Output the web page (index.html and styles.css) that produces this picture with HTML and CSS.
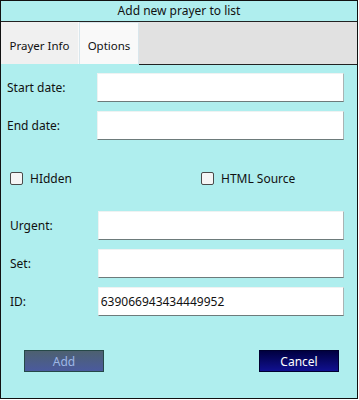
FILE: index.html
```html
<!DOCTYPE html>
<html lang="en">

<head>
  <meta charset="UTF-8">
  <meta name="viewport" content="width=device-width, initial-scale=1.0">
  <title>Add new prayer to list</title>
  <link rel="stylesheet" href="styles.css">
</head>

<body>
  <div class="window">
    <div class="titlebar">Add new prayer to list</div>

    <div class="tabs">
      <div class="tab">Prayer Info</div>
      <div class="tab active">Options</div>
      <div class="tab-fill"></div>
    </div>

    <div class="panel">
      <div class="field">
        <label class="label">Start date:</label>
        <input class="box" type="text">
      </div>
      <div class="field">
        <label class="label">End date:</label>
        <input class="box" type="text">
      </div>

      <div class="checks">
        <label class="check"><span class="tick"></span>HIdden</label>
        <label class="check check-right"><span class="tick"></span>HTML Source</label>
      </div>

      <div class="lower">
        <div class="field">
          <label class="label">Urgent:</label>
          <input class="box" type="text">
        </div>
        <div class="field">
          <label class="label">Set:</label>
          <input class="box" type="text">
        </div>
        <div class="field">
          <label class="label">ID:</label>
          <input class="box" type="text" value="639066943434449952">
        </div>
      </div>

      <div class="buttons">
        <button class="btn btn-add">Add</button>
        <button class="btn btn-cancel">Cancel</button>
      </div>
    </div>
  </div>
</body>

</html>
```

FILE: styles.css
```css
body {
  margin: 0;
  background: #fff;
  font-family: 'Noto Sans', sans-serif;
  font-size: 12px;
  color: #111;
}

.window {
  width: 358px;
  height: 399px;
  box-sizing: border-box;
  border: 1px solid #111;
  background: #afeeee;
  display: flex;
  flex-direction: column;
}

.titlebar {
  height: 20px;
  line-height: 20px;
  text-align: center;
  border-bottom: 1px solid #222;
  color: #111;
}

.tabs {
  display: flex;
  height: 43px;
}

.tab {
  width: 78px;
  height: 42px;
  box-sizing: border-box;
  background: #f0f0f0;
  border-right: 1px solid #fafafa;
  line-height: 48px;
  text-align: center;
  font-size: 11.5px;
}

.tab.active {
  width: 60px;
  background: #f9f9f9;
  border: 1px solid #d9e6ec;
  border-bottom: none;
  line-height: 46px;
}

.tab-fill {
  flex: 1;
  background: #e1e1e1;
  border-bottom: 1px solid #222;
}

.panel {
  padding: 8px 13px 0 6px;
}

.field {
  display: flex;
  align-items: center;
  height: 29px;
  margin-bottom: 9px;
}

.label {
  width: 90px;
}

.box {
  width: 247px;
  height: 29px;
  box-sizing: border-box;
  margin: 0;
  padding: 0 2px;
  background: #fff;
  border: 1px solid #eef2f2;
  border-right-color: #a9b4b4;
  border-bottom-color: #6d7b7b;
  font-family: 'Noto Sans', sans-serif;
  font-size: 12px;
  color: #111;
  outline: none;
}

.checks {
  display: flex;
  height: 13px;
  margin-top: 32px;
  padding-left: 3px;
}

.check {
  display: flex;
  align-items: center;
  gap: 7px;
  line-height: 13px;
}

.check-right {
  margin-left: auto;
  width: 143px;
}

.tick {
  width: 13px;
  height: 13px;
  box-sizing: border-box;
  border: 1px solid #4a4a4a;
  border-radius: 2px;
  background: #f5f5f5;
}

.lower {
  margin-top: 26px;
  padding-left: 3px;
}

.lower .label {
  width: 88px;
}

.buttons {
  display: flex;
  justify-content: space-between;
  margin-top: 34px;
  padding: 0 5px 0 17px;
}

.btn {
  width: 80px;
  height: 22px;
  font-family: 'Noto Sans', sans-serif;
  font-size: 12px;
  cursor: pointer;
}

.btn-add {
  background: linear-gradient(to bottom, #4d6170, #4a5a9e);
  border: 1px solid #254848;
  color: #9db6e6;
}

.btn-cancel {
  background: linear-gradient(to bottom, #000040, #101090);
  border: 1px solid #000030;
  color: #fff;
}
```
